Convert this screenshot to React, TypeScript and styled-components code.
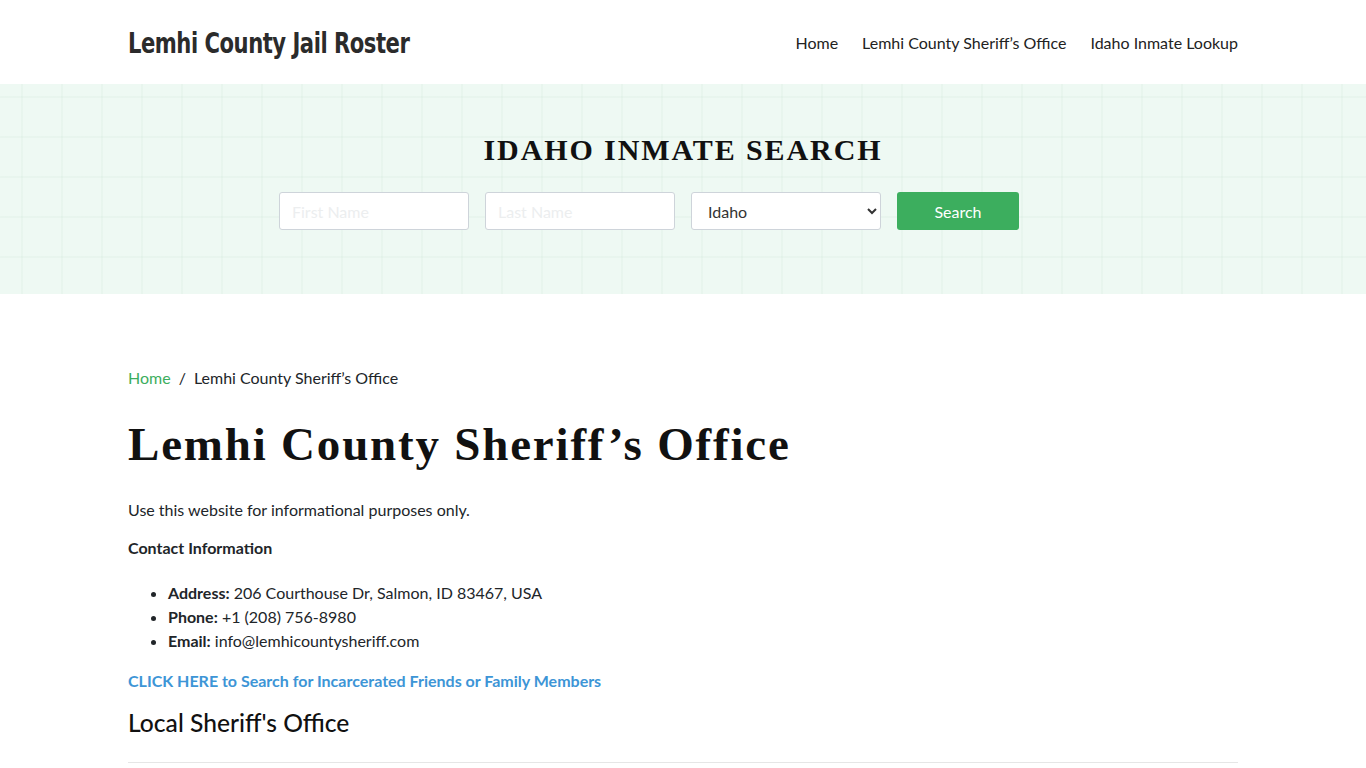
import * as React from 'react';
import styled, { createGlobalStyle } from 'styled-components';

const GlobalStyle = createGlobalStyle`
    body {
        margin: 0;
        background: #ffffff;
        color: #212529;
        font-family: Lato, 'Open Sans', sans-serif;
        font-size: 16px;
        line-height: 1.5;
    }
    * { box-sizing: border-box; }
`;

const Container = styled.div`
    width: 1110px;
    margin: 0 auto;
`;

const Header = styled.header`
    height: 84px;
    background: #ffffff;
`;

const HeaderBar = styled(Container)`
    display: flex;
    align-items: center;
    justify-content: space-between;
    height: 100%;
    padding-top: 2px;
`;

const Logo = styled.a`
    font-family: 'DejaVu Sans Condensed', 'DejaVu Sans', sans-serif;
    font-weight: 700;
    font-size: 29px;
    color: #2b2b2b;
    letter-spacing: -0.6px;
    text-decoration: none;
    transform: scaleX(0.81);
    transform-origin: left center;
    white-space: nowrap;
    margin-top: 2px;
`;

const NavList = styled.ul`
    display: flex;
    gap: 24px;
    margin: 0;
    padding: 0;
    list-style: none;
`;

const NavItem = styled.li`
    font-size: 16px;
    color: #222222;
`;

const Hero = styled.section`
    height: 210px;
    padding-top: 40px;
    background-color: #eef9f3;
    background-image:
        linear-gradient(to right, rgba(205, 228, 214, 0.18) 2px, transparent 2px),
        linear-gradient(to bottom, rgba(205, 228, 214, 0.18) 2px, transparent 2px);
    background-size: 40px 40px;
    background-position: 21px 12px;
`;

const HeroTitle = styled.h2`
    margin: 0 0 16px;
    text-align: center;
    font-family: 'Liberation Serif', 'Times New Roman', serif;
    font-weight: 700;
    font-size: 30px;
    line-height: 52px;
    letter-spacing: 1.9px;
    color: #111111;
`;

const SearchForm = styled.form`
    display: flex;
    justify-content: center;
    gap: 16px;
    padding-right: 68px;
`;

const Field = styled.input`
    width: 190px;
    height: 38px;
    padding: 6px 12px;
    border: 1px solid #ced4da;
    border-radius: 3px;
    background: #ffffff;
    font-family: Lato, sans-serif;
    font-size: 16px;
    &::placeholder { color: #eceeef; }
`;

const StateSelect = styled.select`
    width: 190px;
    height: 38px;
    padding: 6px 12px;
    border: 1px solid #ced4da;
    border-radius: 3px;
    background: #ffffff;
    font-family: Lato, sans-serif;
    font-size: 16px;
    color: #333333;
`;

const SearchButton = styled.button`
    width: 122px;
    height: 38px;
    border: none;
    border-radius: 3px;
    background: #3cae5e;
    color: #ffffff;
    font-family: Lato, sans-serif;
    font-size: 16px;
`;

const Main = styled(Container)`
    padding-top: 72px;
`;

const Breadcrumb = styled.nav`
    display: flex;
    gap: 8px;
    font-size: 16px;
    color: #212529;
    a { color: #3cae5e; text-decoration: none; }
`;

const Title = styled.h1`
    margin: 26px 0 26px;
    font-family: 'Liberation Serif', 'Times New Roman', serif;
    font-weight: 700;
    font-size: 47px;
    line-height: 56px;
    letter-spacing: 1.8px;
    color: #111111;
`;

const Para = styled.p<{ strong?: boolean }>`
    margin: 0 0 14px;
    font-size: 16px;
    line-height: 24px;
    font-weight: ${p => (p.strong ? 700 : 400)};
    color: #212529;
`;

const ContactList = styled.ul`
    margin: 0 0 16px;
    padding-left: 40px;
    padding-top: 7px;
    li { line-height: 24px; }
`;

const CtaLink = styled.a`
    display: block;
    color: #3d95d6;
    font-weight: 700;
    text-decoration: none;
    line-height: 24px;
`;

const SectionTitle = styled.h2`
    margin: 15px 0 0;
    font-family: Lato, sans-serif;
    font-weight: 500;
    font-size: 24.6px;
    line-height: 30px;
    color: #111111;
    padding-bottom: 24px;
    border-bottom: 1px solid #e6e6e6;
`;

export default function App() {
    return (
        <>
            <GlobalStyle />
            <Header>
                <HeaderBar>
                    <Logo href="#">Lemhi County Jail Roster</Logo>
                    <NavList>
                        <NavItem>Home</NavItem>
                        <NavItem>Lemhi County Sheriff’s Office</NavItem>
                        <NavItem>Idaho Inmate Lookup</NavItem>
                    </NavList>
                </HeaderBar>
            </Header>
            <Hero>
                <HeroTitle>IDAHO INMATE SEARCH</HeroTitle>
                <SearchForm onSubmit={e => e.preventDefault()}>
                    <Field placeholder="First Name" />
                    <Field placeholder="Last Name" />
                    <StateSelect defaultValue="Idaho">
                        <option>Idaho</option>
                    </StateSelect>
                    <SearchButton type="submit">Search</SearchButton>
                </SearchForm>
            </Hero>
            <Main>
                <Breadcrumb>
                    <a href="#">Home</a>
                    <span>/</span>
                    <span>Lemhi County Sheriff’s Office</span>
                </Breadcrumb>
                <Title>Lemhi County Sheriff’s Office</Title>
                <Para>Use this website for informational purposes only.</Para>
                <Para strong>Contact Information</Para>
                <ContactList>
                    <li><b>Address:</b> 206 Courthouse Dr, Salmon, ID 83467, USA</li>
                    <li><b>Phone:</b> +1 (208) 756-8980</li>
                    <li><b>Email:</b> info@lemhicountysheriff.com</li>
                </ContactList>
                <CtaLink href="#">CLICK HERE to Search for Incarcerated Friends or Family Members</CtaLink>
                <SectionTitle>Local Sheriff's Office</SectionTitle>
            </Main>
        </>
    );
}
